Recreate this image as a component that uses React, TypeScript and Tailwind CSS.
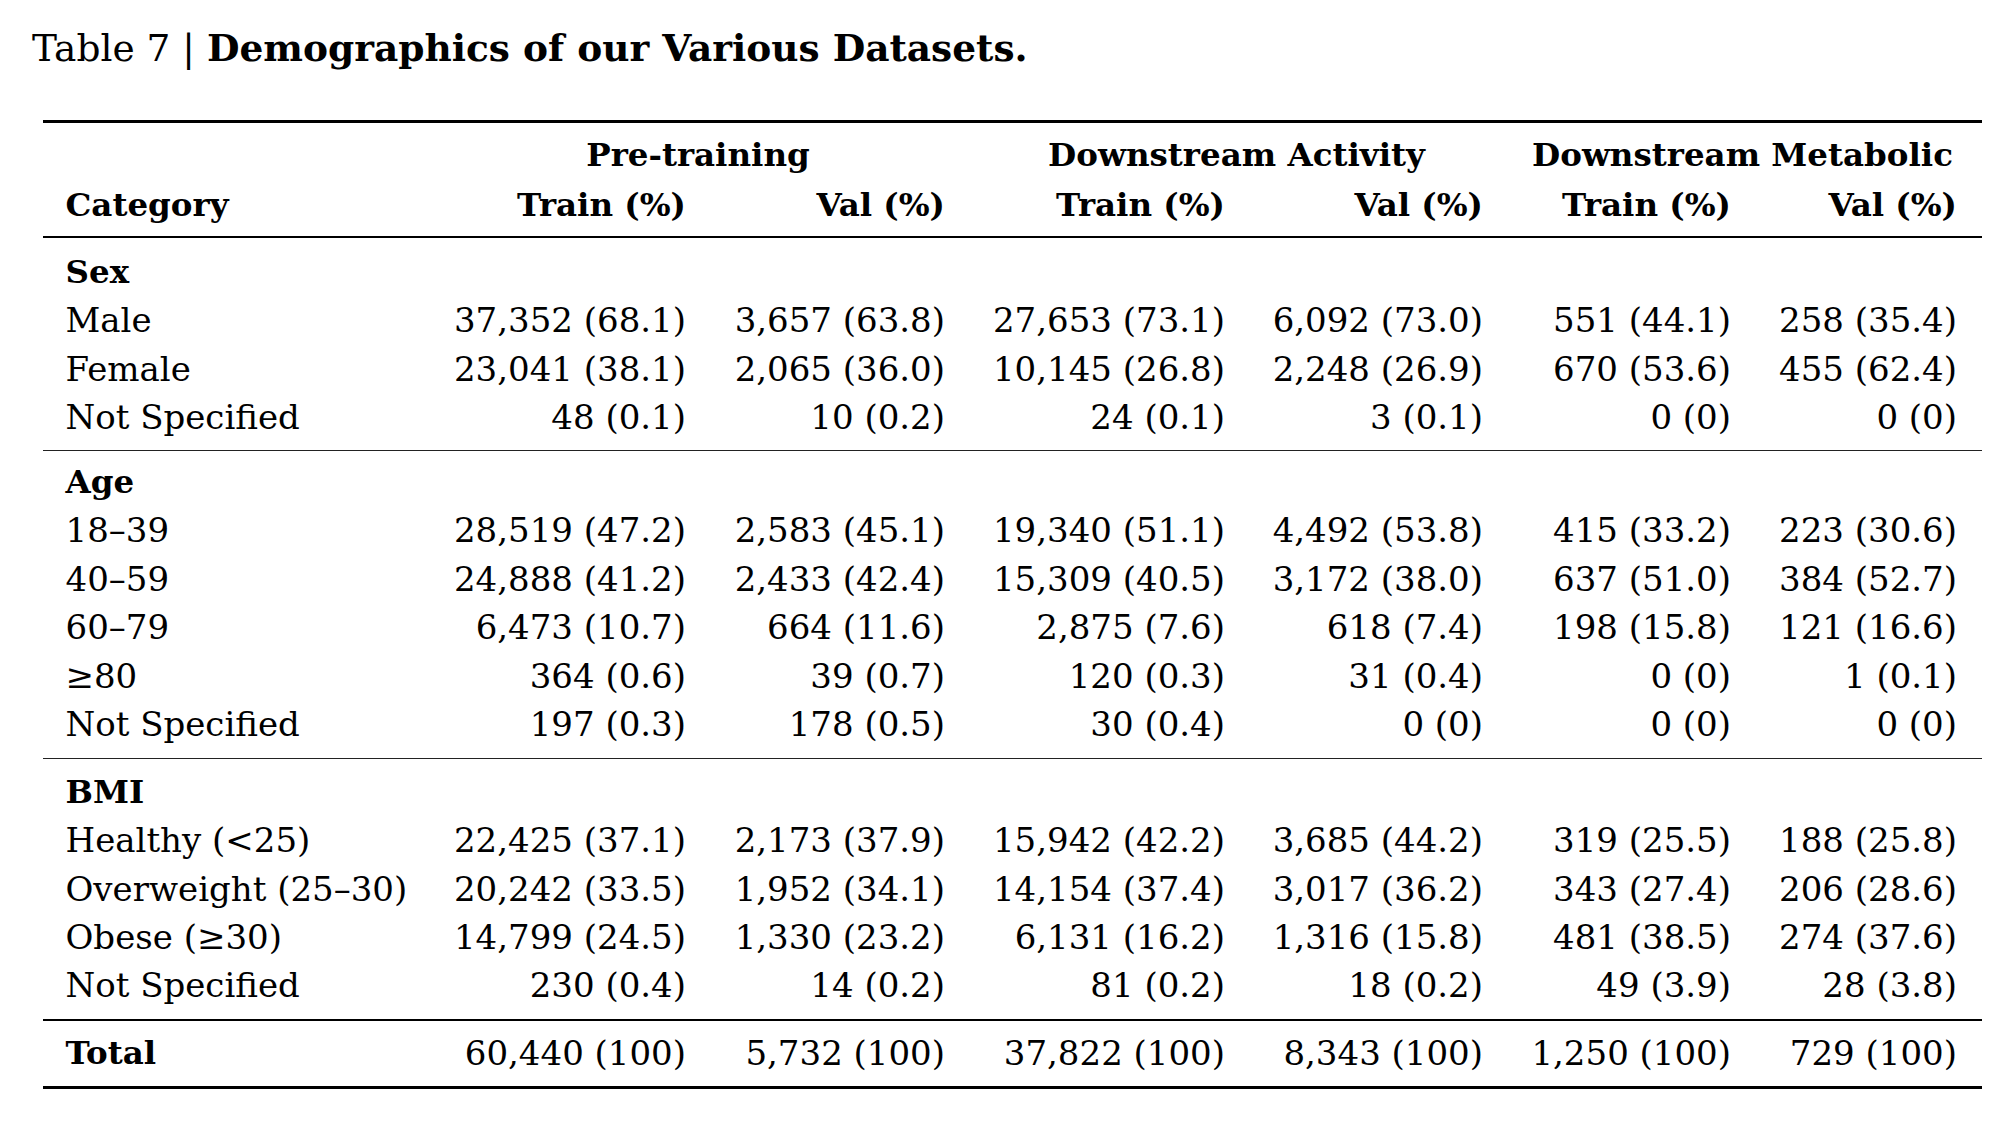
import React from "react";

type Row = [string, string, string, string, string, string, string];

const groups: { title: string; rows: Row[]; pt: string; pb: string }[] = [
  {
    title: "Sex",
    pt: "pt-[10px]",
    pb: "pb-[8px]",
    rows: [
      ["Male", "37,352 (68.1)", "3,657 (63.8)", "27,653 (73.1)", "6,092 (73.0)", "551 (44.1)", "258 (35.4)"],
      ["Female", "23,041 (38.1)", "2,065 (36.0)", "10,145 (26.8)", "2,248 (26.9)", "670 (53.6)", "455 (62.4)"],
      ["Not Specified", "48 (0.1)", "10 (0.2)", "24 (0.1)", "3 (0.1)", "0 (0)", "0 (0)"],
    ],
  },
  {
    title: "Age",
    pt: "pt-[7px]",
    pb: "pb-[9.5px]",
    rows: [
      ["18–39", "28,519 (47.2)", "2,583 (45.1)", "19,340 (51.1)", "4,492 (53.8)", "415 (33.2)", "223 (30.6)"],
      ["40–59", "24,888 (41.2)", "2,433 (42.4)", "15,309 (40.5)", "3,172 (38.0)", "637 (51.0)", "384 (52.7)"],
      ["60–79", "6,473 (10.7)", "664 (11.6)", "2,875 (7.6)", "618 (7.4)", "198 (15.8)", "121 (16.6)"],
      ["≥80", "364 (0.6)", "39 (0.7)", "120 (0.3)", "31 (0.4)", "0 (0)", "1 (0.1)"],
      ["Not Specified", "197 (0.3)", "178 (0.5)", "30 (0.4)", "0 (0)", "0 (0)", "0 (0)"],
    ],
  },
  {
    title: "BMI",
    pt: "pt-[8.5px]",
    pb: "pb-[9.5px]",
    rows: [
      ["Healthy (<25)", "22,425 (37.1)", "2,173 (37.9)", "15,942 (42.2)", "3,685 (44.2)", "319 (25.5)", "188 (25.8)"],
      ["Overweight (25–30)", "20,242 (33.5)", "1,952 (34.1)", "14,154 (37.4)", "3,017 (36.2)", "343 (27.4)", "206 (28.6)"],
      ["Obese (≥30)", "14,799 (24.5)", "1,330 (23.2)", "6,131 (16.2)", "1,316 (15.8)", "481 (38.5)", "274 (37.6)"],
      ["Not Specified", "230 (0.4)", "14 (0.2)", "81 (0.2)", "18 (0.2)", "49 (3.9)", "28 (3.8)"],
    ],
  },
];

const total: Row = ["Total", "60,440 (100)", "5,732 (100)", "37,822 (100)", "8,343 (100)", "1,250 (100)", "729 (100)"];

const gridCols = "grid grid-cols-[385.5px_280px_259px_280px_258px_248px_228.5px]";

function DataRow({ row, boldFirst = false }: { row: Row; boldFirst?: boolean }) {
  return (
    <div className={`${gridCols} h-[48.4px] leading-[48.4px]`}>
      <div className={`pl-[22.5px] whitespace-nowrap ${boldFirst ? "font-bold text-[32.5px]" : ""}`}>{row[0]}</div>
      {row.slice(1).map((v, i) => (
        <div
          key={i}
          className={`text-right whitespace-nowrap ${i === 5 ? "pr-[25px]" : "pr-[22.5px]"}`}
        >
          {v}
        </div>
      ))}
    </div>
  );
}

function TitleRow({ title }: { title: string }) {
  return (
    <div className="h-[48.4px] leading-[48.4px] pl-[22.5px] font-bold text-[32.5px]">{title}</div>
  );
}

export default function App() {
  return (
    <div className="w-[2014px] h-[1123px] bg-white text-black font-['DejaVu_Serif',serif] overflow-hidden">
      <div className="pt-[24px] pl-[32px] text-[37.5px] leading-[48px] whitespace-nowrap">
        Table 7 | <span className="font-bold">Demographics of our Various Datasets.</span>
      </div>

      <div className="ml-[43px] mt-[48px] w-[1939px] text-[34px]">
        <div className="h-[3px] bg-black" />

        <div className="pt-[7px] pb-[6px] font-bold text-[32.5px]">
          <div className={`${gridCols} h-[50px] leading-[50px]`}>
            <div />
            <div className="col-span-2 px-[22.5px] text-center whitespace-nowrap">Pre-training</div>
            <div className="col-span-2 px-[22.5px] text-center whitespace-nowrap">Downstream Activity</div>
            <div className="col-span-2 pl-[22.5px] pr-[25px] whitespace-nowrap flex justify-center">
              <span>Downstream Metabolic</span>
            </div>
          </div>
          <div className={`${gridCols} h-[50px] leading-[50px]`}>
            <div className="pl-[22.5px]">Category</div>
            <div className="text-right pr-[22.5px] whitespace-nowrap">Train (%)</div>
            <div className="text-right pr-[22.5px] whitespace-nowrap">Val (%)</div>
            <div className="text-right pr-[22.5px] whitespace-nowrap">Train (%)</div>
            <div className="text-right pr-[22.5px] whitespace-nowrap">Val (%)</div>
            <div className="text-right pr-[22.5px] whitespace-nowrap">Train (%)</div>
            <div className="text-right pr-[25px] whitespace-nowrap">Val (%)</div>
          </div>
        </div>

        <div className="h-[2px] bg-black" />

        {groups.map((g, gi) => (
          <React.Fragment key={g.title}>
            <div className={`${g.pt} ${g.pb}`}>
              <TitleRow title={g.title} />
              {g.rows.map((r, ri) => (
                <DataRow key={ri} row={r} />
              ))}
            </div>
            <div className={gi === groups.length - 1 ? "h-[2px] bg-black" : "h-[1.5px] bg-[#222]"} />
          </React.Fragment>
        ))}

        <div className="pt-[7.5px] pb-[9px]">
          <DataRow row={total} boldFirst />
        </div>
        <div className="h-[3px] bg-black" />
      </div>
    </div>
  );
}
